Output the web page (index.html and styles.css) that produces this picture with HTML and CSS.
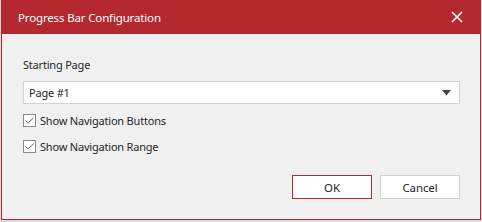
FILE: index.html
```html
<!DOCTYPE html>
<html lang="en">
<head>
    <meta charset="UTF-8">
    <title>Progress Bar Configuration</title>
    <link rel="stylesheet" href="styles.css">
</head>
<body>
    <div class="dialog">
        <div class="titlebar">
            <span class="title">Progress Bar Configuration</span>
            <svg class="close" width="12" height="12" viewBox="0 0 12 12">
                <path d="M1 1 L11 11 M11 1 L1 11" stroke="#fff" stroke-width="1.6"/>
            </svg>
        </div>
        <div class="content">
            <div class="label">Starting Page</div>
            <div class="combo">
                <span>Page #1</span>
                <svg width="9" height="6" viewBox="0 0 9 6">
                    <path d="M0 0 H9 L4.5 5.5 Z" fill="#444"/>
                </svg>
            </div>
            <label class="check">
                <span class="box">
                    <svg width="9" height="7" viewBox="0 0 9 7"><path d="M0.5 3.5 L3.2 6 L8.5 0.8" fill="none" stroke="#555" stroke-width="1"/></svg>
                </span>
                Show Navigation Buttons
            </label>
            <label class="check">
                <span class="box">
                    <svg width="9" height="7" viewBox="0 0 9 7"><path d="M0.5 3.5 L3.2 6 L8.5 0.8" fill="none" stroke="#555" stroke-width="1"/></svg>
                </span>
                Show Navigation Range
            </label>
            <div class="buttons">
                <button class="btn ok">OK</button>
                <button class="btn">Cancel</button>
            </div>
        </div>
    </div>
</body>
</html>
```

FILE: styles.css
```css
body {
    margin: 0;
    background: #d9d9d9;
    font-family: "Noto Sans", "Open Sans", sans-serif;
    font-size: 11px;
    letter-spacing: -0.2px;
    color: #262626;
}
.dialog {
    width: 478px;
    height: 219px;
    margin-left: 1px;
    border: 1px solid #b3282e;
    border-top: none;
    background: #f0f0f0;
    display: flex;
    flex-direction: column;
}
.titlebar {
    height: 34px;
    background: #b3292f;
    color: #fff;
    display: flex;
    align-items: center;
    justify-content: space-between;
    padding: 0 17px 0 16px;
    flex-shrink: 0;
}
.title {
    font-size: 11.5px;
    letter-spacing: -0.15px;
}
.content {
    padding: 0 20px 0 21px;
    display: flex;
    flex-direction: column;
}
.label {
    margin-top: 22px;
    height: 17px;
    line-height: 17px;
}
.combo {
    margin-top: 8px;
    height: 21px;
    border: 1px solid #d2d2d8;
    background: #fff;
    display: flex;
    align-items: center;
    justify-content: space-between;
    padding: 0 8px 0 5px;
}
.check {
    display: flex;
    align-items: center;
    height: 17px;
    margin-top: 8px;
}
.check + .check {
    margin-top: 9px;
}
.box {
    width: 11px;
    height: 11px;
    border: 1px solid #8a8a8a;
    background: #fff;
    display: flex;
    align-items: center;
    justify-content: center;
    margin-right: 4px;
}
.buttons {
    display: flex;
    justify-content: flex-end;
    gap: 8px;
    margin-top: 20px;
}
.btn {
    width: 80px;
    height: 24px;
    background: #fff;
    border: 1px solid #d0d0d0;
    font-family: inherit;
    font-size: 11.5px;
    letter-spacing: -0.1px;
    color: #262626;
    padding: 0;
}
.btn.ok {
    border-color: #b3282e;
}
```
